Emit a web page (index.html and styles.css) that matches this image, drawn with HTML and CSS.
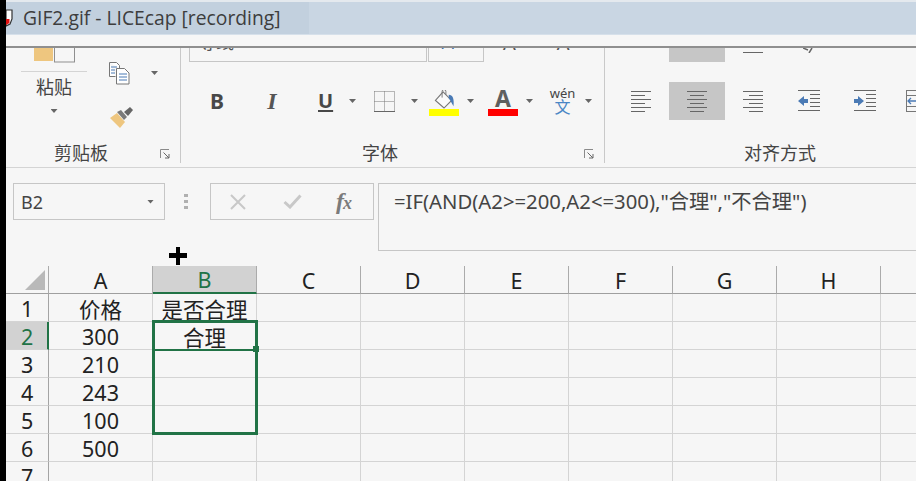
FILE: index.html
```
<!DOCTYPE html>
<html lang="zh-CN">
<head>
<meta charset="utf-8">
<title>GIF2.gif - LICEcap [recording]</title>
<link rel="stylesheet" href="styles.css">
</head>
<body>
<div class="app">
  <div class="edge"></div>
  <div class="main">
    <header class="titlebar">
      <div class="title-left">
        <svg class="app-icon" viewBox="0 0 7 18" width="7" height="18"><path d="M0 1h6v9l-2 5-4 2z" fill="#fff" stroke="#333" stroke-width="1.2"/><path d="M0 10h3.5v4L0 16z" fill="#e01010"/></svg>
        <span class="title-text">GIF2.gif - LICEcap [recording]</span>
      </div>
    </header>
    <div class="tabstrip"></div>
    <section class="ribbon">
      <div class="group group-clip">
        <div class="clip-upper">
          <div class="paste-col">
            <svg class="paste-top" viewBox="0 0 41 15" width="41" height="15"><rect x="0" y="-4" width="19" height="17" fill="#eec67f"/><rect x="20.5" y="-4" width="20" height="18" fill="none" stroke="#8f8f8f"/></svg>
            <div class="paste-rule"></div>
            <div class="paste-label">粘贴</div>
            <span class="caret caret-paste"></span>
          </div>
          <div class="side-col">
            <div class="copy-row">
              <svg viewBox="0 0 21 23" width="21" height="23"><path d="M.5.5h7l3 3v3M.5.5v14h6" fill="#fff" stroke="#777"/><path d="M2 5h6M2 8h4M2 11h4" stroke="#4a7ab5"/><path d="M7.500 6.500h8l4.500 4.500v11h-12.500z" fill="#fff" stroke="#777"/><path d="M10 12h8M10 15h8M10 18h8" stroke="#4a7ab5"/></svg>
              <span class="caret caret-copy"></span>
            </div>
            <svg class="brush" viewBox="0 0 24 21" width="24" height="21"><path d="M0 11l7-5 8 9-5 6z" fill="#eec67f"/><path d="M7 5l4-2 6 7-3 3z" fill="#7a7a7a"/><path d="M14 5l6-5 3 3-5 6z" fill="#666"/></svg>
          </div>
        </div>
        <div class="label-row label-clip">
          <span class="group-label">剪贴板</span>
          <svg class="launcher" viewBox="0 0 10 10" width="10" height="10"><path d="M9 .5H.5V9" fill="none" stroke="#8a8a8a"/><path d="M3.500 3.500L9 9M9 5v4H5" fill="none" stroke="#666"/></svg>
        </div>
      </div>
      <div class="group group-font">
        <div class="cut-row font-cut">
          <div class="font-name"><span class="cut-text">等线</span></div>
          <div class="font-size"><span class="cut-size">11</span></div>
          <span class="grow-a">A</span>
          <span class="shrink-a">A</span>
        </div>
        <div class="tools font-tools">
          <span class="t-b">B</span>
          <span class="t-i">I</span>
          <span class="t-u">U</span>
          <span class="caret c-u"></span>
          <svg class="i-border" viewBox="0 0 21 21" width="21" height="21"><path d="M.5.500h20M.500.500v20M20.500.500v20M10.500.500v20M.5 10.500h20" fill="none" stroke="#777" stroke-dasharray="1 1"/><path d="M0 20.500h21" stroke="#666"/></svg>
          <span class="caret c-border"></span>
          <div class="swatch-tool fill-tool">
            <svg viewBox="0 0 30 20" width="30" height="19"><path d="M14 2l9 9-8 8-9-8z" fill="#fafafa" stroke="#777" stroke-width="1.200"/><path d="M13 8V1.500a2 2 0 0 1 4 0V5" fill="none" stroke="#777"/><path d="M20 5c4 0 6 4 5 12-2-3-3-6-5-8z" fill="#4a7ab5"/></svg>
            <div class="bar bar-yellow"></div>
          </div>
          <span class="caret c-fill"></span>
          <div class="swatch-tool color-tool">
            <span class="t-a">A</span>
            <div class="bar bar-red"></div>
          </div>
          <span class="caret c-color"></span>
          <div class="wen-tool"><span class="wen-top">wén</span><span class="wen-bottom">文</span></div>
          <span class="caret c-wen"></span>
        </div>
        <div class="label-row label-font">
          <span class="group-label">字体</span>
          <svg class="launcher" viewBox="0 0 10 10" width="10" height="10"><path d="M9 .5H.5V9" fill="none" stroke="#8a8a8a"/><path d="M3.500 3.500L9 9M9 5v4H5" fill="none" stroke="#666"/></svg>
        </div>
      </div>
      <div class="group group-align">
        <div class="cut-row align-cut">
          <div class="cut-active"></div>
          <div class="cut-line"></div>
          <svg class="cut-orient" viewBox="0 0 12 5" width="12" height="5"><path d="M0 0l5 2M9 0L6 5" stroke="#666" stroke-width="1.500"/></svg>
        </div>
        <div class="tools align-tools">
          <div class="lines lines-left"><i></i><i></i><i></i><i></i><i></i><i></i></div>
          <div class="align-active"><div class="lines lines-center"><i></i><i></i><i></i><i></i><i></i><i></i></div></div>
          <div class="lines lines-right"><i></i><i></i><i></i><i></i><i></i><i></i></div>
          <svg class="i-outdent" viewBox="0 0 22 22" width="22" height="22"><path d="M0 11l6-5v3h4v4H6v3z" fill="#4a7ab5"/><path d="M0 .5h22M12 4.500h10M12 8.500h10M12 12.500h10M12 16.500h10M0 20.500h22" stroke="#666"/></svg>
          <svg class="i-indent" viewBox="0 0 22 22" width="22" height="22"><path d="M10 11L4 6v3H0v4h4v3z" fill="#4a7ab5"/><path d="M0 .5h22M12 4.500h10M12 8.500h10M12 12.500h10M12 16.500h10M0 20.500h22" stroke="#666"/></svg>
          <svg class="i-wrap" viewBox="0 0 22 22" width="22" height="22"><rect x=".5" y=".5" width="30" height="21" fill="none" stroke="#777"/><path d="M0 5.500h22M0 16.500h22" stroke="#777"/><path d="M2 11h9M5 8l-3 3 3 3" fill="none" stroke="#4a7ab5" stroke-width="1.300"/></svg>
        </div>
        <div class="label-row label-align"><span class="group-label">对齐方式</span></div>
      </div>
    </section>
    <section class="formula-bar">
      <div class="name-box"><span class="name-text">B2</span><span class="caret caret-name"></span></div>
      <div class="grip"><i></i><i></i><i></i></div>
      <div class="fx-buttons">
        <svg class="i-x" viewBox="0 0 18 16" width="18" height="16"><path d="M2 1l14 14M16 1L2 15" stroke="#c8c8c8" stroke-width="2"/></svg>
        <svg class="i-check" viewBox="0 0 19 15" width="19" height="15"><path d="M1.500 8l5.500 5L17.500 1.500" fill="none" stroke="#c8c8c8" stroke-width="3"/></svg>
        <span class="fx"><span>f</span><span class="fx-x">x</span></span>
      </div>
      <div class="formula-box">=IF(AND(A2&gt;=200,A2&lt;=300),"合理","不合理")</div>
    </section>
    <section class="sheet">
      <div class="hd corner"><span class="tri"></span></div>
      <div class="hd col">A</div>
      <div class="hd col col-on">B</div>
      <div class="hd col">C</div>
      <div class="hd col">D</div>
      <div class="hd col">E</div>
      <div class="hd col">F</div>
      <div class="hd col">G</div>
      <div class="hd col">H</div>
      <div class="hd col"></div>

      <div class="row-hd">1</div><div class="cell">价格</div><div class="cell">是否合理</div><div class="cell"></div><div class="cell"></div><div class="cell"></div><div class="cell"></div><div class="cell"></div><div class="cell"></div><div class="cell"></div>
      <div class="row-hd row-on">2</div><div class="cell">300</div><div class="cell">合理</div><div class="cell"></div><div class="cell"></div><div class="cell"></div><div class="cell"></div><div class="cell"></div><div class="cell"></div><div class="cell"></div>
      <div class="row-hd">3</div><div class="cell">210</div><div class="cell"></div><div class="cell"></div><div class="cell"></div><div class="cell"></div><div class="cell"></div><div class="cell"></div><div class="cell"></div><div class="cell"></div>
      <div class="row-hd">4</div><div class="cell">243</div><div class="cell"></div><div class="cell"></div><div class="cell"></div><div class="cell"></div><div class="cell"></div><div class="cell"></div><div class="cell"></div><div class="cell"></div>
      <div class="row-hd">5</div><div class="cell">100</div><div class="cell"></div><div class="cell"></div><div class="cell"></div><div class="cell"></div><div class="cell"></div><div class="cell"></div><div class="cell"></div><div class="cell"></div>
      <div class="row-hd">6</div><div class="cell">500</div><div class="cell"></div><div class="cell"></div><div class="cell"></div><div class="cell"></div><div class="cell"></div><div class="cell"></div><div class="cell"></div><div class="cell"></div>
      <div class="row-hd">7</div><div class="cell"></div><div class="cell"></div><div class="cell"></div><div class="cell"></div><div class="cell"></div><div class="cell"></div><div class="cell"></div><div class="cell"></div><div class="cell"></div>

      <div class="selection"><div class="active-line"></div><div class="handle"></div></div>
    </section>
  </div>
  <div class="cross"></div>
</div>
</body>
</html>
```

FILE: styles.css
```
* { box-sizing: border-box; }
html, body { margin: 0; padding: 0; }
body {
  width: 916px; height: 481px; overflow: hidden; background: #f6f6f6;
  font-family: "Noto Sans", "Noto Sans CJK SC", sans-serif; color: #444;
}
.app { position: relative; display: flex; width: 916px; height: 481px; overflow: hidden; }
.edge { width: 6px; flex: none; background: #000; }
.main { width: 910px; flex: none; display: flex; flex-direction: column; overflow: hidden; }

/* title bar */
.titlebar {
  height: 35px; flex: none; background: #c9d6e3;
  border-top: 2px solid #e4e9ee; border-bottom: 1px solid #d6e0ea;
}
.title-left { width: 303px; height: 32px; background: #c2d0de; display: flex; align-items: center; }
.app-icon { flex: none; }
.title-text { margin-left: 10px; font-family: "Open Sans", sans-serif; font-size: 19.300px; line-height: 30px; color: #3d3d3d; white-space: nowrap; }
.tabstrip { height: 11px; flex: none; background: #f6f6f6; }

/* ribbon */
.ribbon {
  height: 122px; flex: none; display: flex; padding-bottom: 4px;
  border-top: 2px solid #8f8f8f; border-bottom: 1px solid #d4d4d4; background: #f6f6f6;
}
.group { display: flex; flex-direction: column; border-right: 1px solid #c9c9c9; flex: none; }
.group-clip { width: 175px; }
.group-font { width: 424px; }
.group-align { width: 350px; border-right: 0; }
.clip-upper { display: flex; height: 93px; flex: none; }
.label-row { display: flex; align-items: center; height: 22px; flex: none; margin-top: auto; }
.group-label { font-size: 18px; line-height: 22px; margin-top: 2px; color: #444; white-space: nowrap; }
.label-clip .group-label { margin-left: 48px; }
.label-font .group-label { margin-left: 181px; }
.label-align .group-label { margin-left: 139px; }
.launcher { margin-left: auto; margin-right: 10px; margin-top: 3px; }

.caret { display: block; width: 7px; height: 4px; flex: none; background: #666; clip-path: polygon(0 0, 100% 0, 50% 100%); }

/* clipboard */
.paste-col { width: 66px; margin-left: 15px; display: flex; flex-direction: column; align-items: center; }
.paste-top { flex: none; }
.paste-rule { width: 66px; height: 1px; background: #d4d4d4; margin-top: 8px; }
.paste-label { font-size: 18px; line-height: 24px; margin-top: 3px; }
.caret-paste { margin-top: 10px; }
.side-col { margin-left: 22px; display: flex; flex-direction: column; }
.copy-row { display: flex; margin-top: 14px; }
.caret-copy { margin-left: 21px; margin-top: 9px; }
.brush { margin-top: 22px; margin-left: 1px; }

/* font */
.cut-row { height: 14px; flex: none; display: flex; overflow: hidden; }
.font-cut { padding-left: 8px; align-items: flex-start; }
.font-name { width: 238px; height: 14px; border: 1px solid #c6c6c6; border-top: 0; padding-left: 8px; overflow: hidden; }
.cut-text { display: block; margin-top: -18px; font-size: 18px; line-height: 24px; color: #555; }
.font-size { width: 56px; height: 14px; margin-left: 1px; border: 1px solid #c6c6c6; border-top: 0; padding-left: 8px; overflow: hidden; }
.cut-size { display: block; margin-top: -18px; font-size: 18px; line-height: 24px; color: #3b6fb0; }
.grow-a, .shrink-a { font-size: 20px; line-height: 28px; margin-top: -19px; color: #555; display: block; }
.grow-a { margin-left: 19px; }
.shrink-a { margin-left: 41px; }

.tools { display: flex; align-items: center; height: 38px; margin-top: 20px; flex: none; }
.font-tools { padding-left: 29px; }
.t-b, .t-i, .t-u { display: block; text-align: center; line-height: 24px; color: #484848; }
.t-b { width: 14px; font: bold 21px/24px "Noto Sans", sans-serif; }
.t-i { width: 12px; margin-left: 42px; font: italic bold 24px/24px "Liberation Serif", serif; color: #555; }
.t-u { width: 14px; margin-left: 40px; font: bold 20px/22px "Noto Sans", sans-serif; text-decoration: underline; text-underline-offset: 2px; }
.c-u { margin-left: 17px; }
.i-border { margin-left: 18px; }
.c-border { margin-left: 16px; }
.swatch-tool { width: 30px; display: flex; flex-direction: column; align-items: center; align-self: flex-start; }
.fill-tool { margin-left: 11px; margin-top: 8px; }
.c-fill { margin-left: 8px; }
.color-tool { margin-left: 14px; margin-top: 6px; }
.c-color { margin-left: 8px; }
.bar { width: 30px; height: 7px; flex: none; }
.bar-yellow { background: #ffff00; }
.bar-red { background: #ff0000; }
.t-a { display: block; font: bold 23px/21px "Noto Sans", sans-serif; color: #5f5f5f; height: 21px; }
.wen-tool { width: 23px; margin-left: 18px; display: flex; flex-direction: column; align-items: center; }
.wen-top { font-size: 13px; line-height: 12px; color: #444; }
.wen-bottom { font-size: 16px; line-height: 16px; color: #4a86c5; }
.c-wen { margin-left: 11px; }

/* alignment */
.align-cut { padding-left: 64px; }
.cut-active { width: 56px; height: 15px; background: #c6c6c6; }
.cut-line { width: 20px; height: 5px; margin-left: 18px; border-bottom: 1px solid #666; }
.cut-orient { margin-left: 40px; }
.align-tools { padding-left: 26px; }
.lines { width: 20px; height: 21px; display: flex; flex-direction: column; justify-content: space-between; flex: none; }
.lines i { display: block; height: 1px; background: #666; }
.lines-left i:nth-child(even) { width: 14px; }
.lines-center { align-items: center; }
.lines-center i { width: 20px; }
.lines-center i:nth-child(even) { width: 14px; }
.lines-right { margin-left: 18px; align-items: flex-end; }
.lines-right i { width: 20px; }
.lines-right i:nth-child(even) { width: 14px; }
.align-active { width: 56px; height: 38px; margin-left: 18px; background: #c6c6c6; display: flex; align-items: center; justify-content: center; }
.i-outdent { margin-left: 35px; }
.i-indent { margin-left: 34px; }
.i-wrap { margin-left: 30px; overflow: hidden; }

/* formula bar */
.formula-bar { height: 98px; flex: none; display: flex; align-items: flex-start; padding: 15px 0 0 7px; background: #f6f6f6; }
.name-box { width: 152px; height: 37px; flex: none; border: 1px solid #c6c6c6; display: flex; align-items: center; padding-left: 7px; }
.name-text { font-size: 18px; color: #444; }
.caret-name { margin-left: auto; margin-right: 10px; }
.grip { width: 4px; height: 15px; margin: 11px 22px 0 19px; flex: none; display: flex; flex-direction: column; justify-content: space-between; }
.grip i { display: block; height: 3px; background: #b0b0b0; }
.fx-buttons { width: 164px; height: 37px; flex: none; border: 1px solid #c6c6c6; display: flex; align-items: center; padding-left: 18px; }
.i-check { margin-left: 36px; }
.fx { margin-left: 34px; font: italic bold 24px/24px "Liberation Serif", serif; color: #7b7b7b; letter-spacing: -1px; }
.fx-x { font-size: 18px; }
.formula-box {
  width: 600px; height: 68px; margin-left: 4px; flex: none; border: 1px solid #c6c6c6;
  padding: 2px 0 0 15px; font-size: 20.300px; line-height: 30px; color: #444; white-space: nowrap;
}

/* sheet */
.sheet {
  position: relative; display: grid; flex: none;
  grid-template-columns: 43px repeat(8, 104px) 40px;
  grid-auto-rows: 28px; font-size: 21.500px; color: #222;
}
.hd, .row-hd, .cell { display: flex; align-items: center; justify-content: center; overflow: visible; white-space: nowrap; padding-top: 1px; }
.hd { border-bottom: 1px solid #9f9f9f; }
.col { border-right: 1px solid #ababab; }
.corner { border-right: 1px solid #ababab; justify-content: flex-start; padding-top: 0; }
.tri { display: block; width: 0; height: 0; margin-left: 19px; margin-top: 1px; border-left: 20px solid transparent; border-bottom: 20px solid #b9b9b9; }
.col-on { background: #d2d2d2; color: #217346; border-bottom: 2px solid #217346; }
.row-hd { border-right: 1px solid #a4a4a4; border-bottom: 1px solid #d4d4d4; justify-content: flex-start; padding-left: 15px; }
.row-on { background: #d2d2d2; color: #217346; border-right: 2px solid #217346; }
.cell { border-right: 1px solid #d4d4d4; border-bottom: 1px solid #d4d4d4; }
.selection { position: absolute; left: 146px; top: 54px; width: 106px; height: 115px; border: 3px solid #217346; }
.active-line { height: 2px; margin-top: 26px; background: #217346; }
.handle { position: absolute; right: -4px; top: 23px; width: 6px; height: 6px; background: #217346; }

/* fill cursor */
.cross { position: absolute; left: 169px; top: 253px; width: 18px; height: 5px; background: #000; }
.cross::before { content: ""; position: absolute; left: 7px; top: -6px; width: 4px; height: 18px; background: #000; }
```
